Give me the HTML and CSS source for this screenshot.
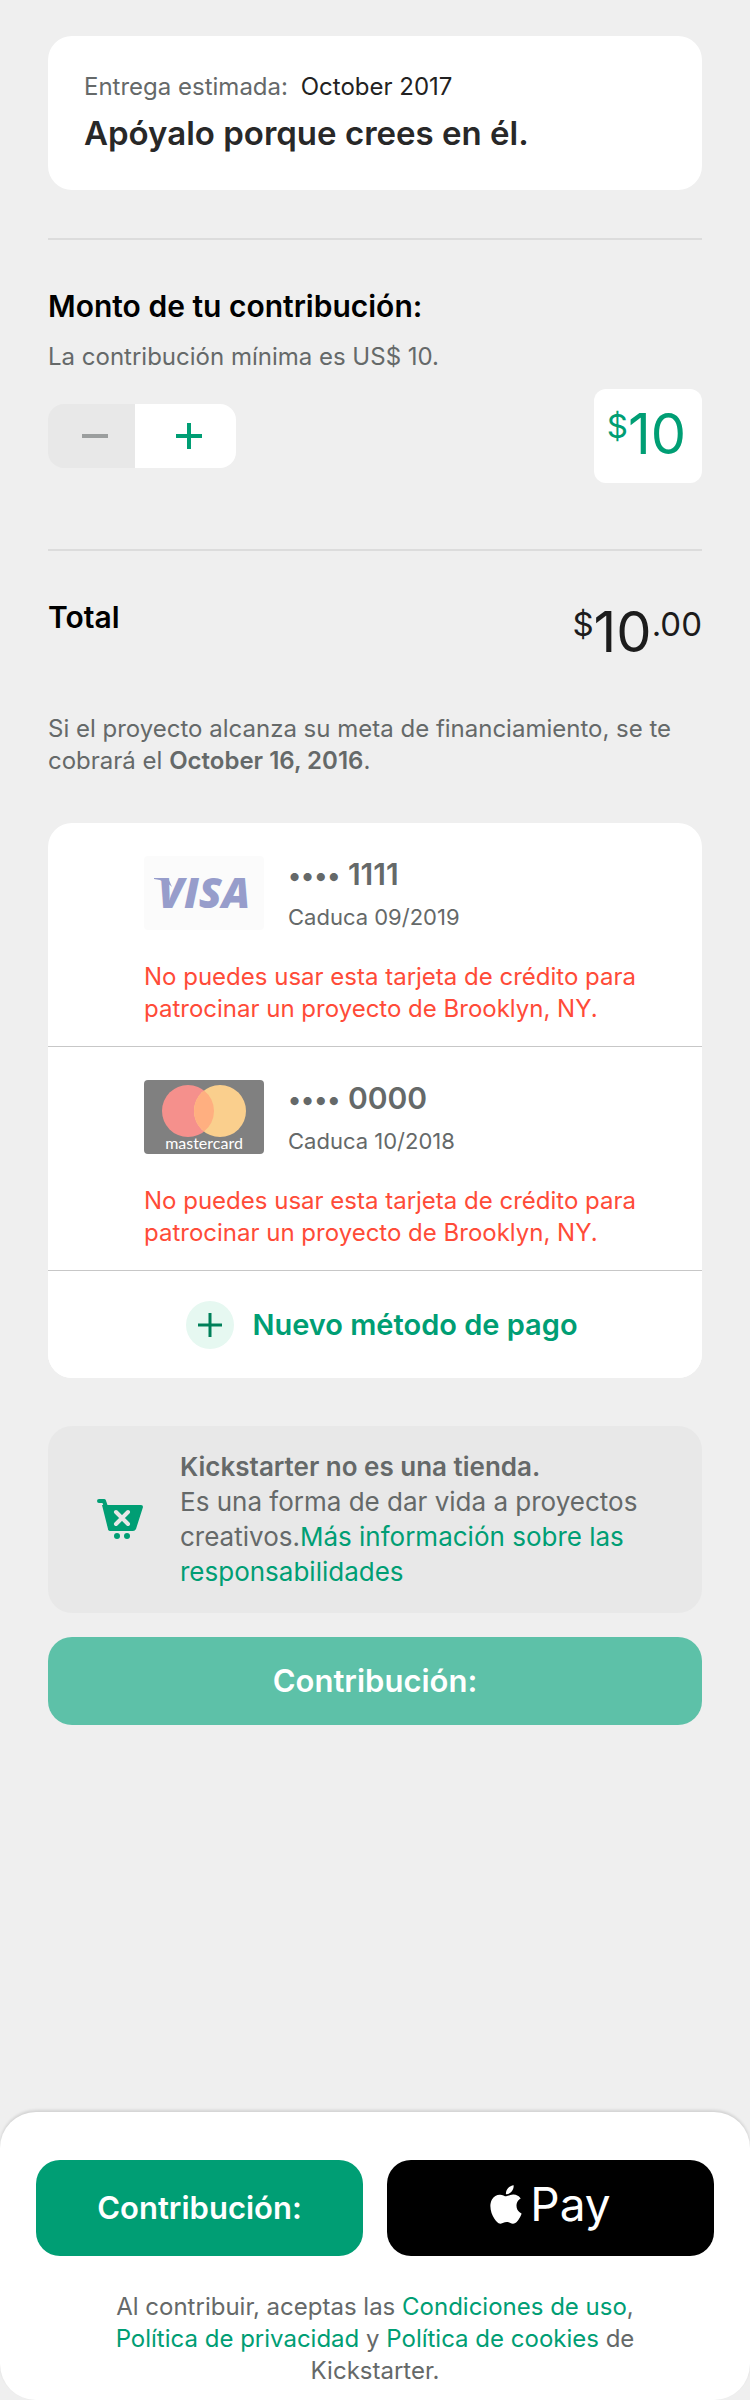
FILE: index.html
```html
<!DOCTYPE html>
<html lang="es">
<head>
<meta charset="utf-8">
<meta name="viewport" content="width=device-width, initial-scale=1">
<title>Contribución</title>
<link rel="stylesheet" href="styles.css">
</head>
<body>
<main class="content">
  <section class="reward">
    <p class="reward-date">Entrega estimada: <span class="reward-month">October 2017</span></p>
    <h1 class="reward-title">Apóyalo porque crees en él.</h1>
  </section>

  <section class="block">
    <h2 class="heading"><label for="amount">Monto de tu contribución:</label></h2>
    <p class="hint">La contribución mínima es US$ 10.</p>
    <div class="amount-row">
      <div class="stepper">
        <button class="step step-minus" type="button" aria-label="Disminuir" disabled>
          <svg width="28" height="28" viewBox="0 0 28 28" aria-hidden="true"><path d="M1 14h26" stroke="currentColor" stroke-width="4"/></svg>
        </button>
        <button class="step step-plus" type="button" aria-label="Aumentar">
          <svg width="28" height="28" viewBox="0 0 28 28" aria-hidden="true"><path d="M1 14h26M14 1v26" stroke="currentColor" stroke-width="4"/></svg>
        </button>
      </div>
      <div class="amount-box">
        <span class="currency">$</span><input class="amount-input" id="amount" type="text" inputmode="numeric" value="10">
      </div>
    </div>
  </section>

  <section class="block total">
    <h2 class="heading">Total</h2>
    <p class="total-value"><span class="small-figure">$</span><span class="big-figure">10</span><span class="small-figure">.00</span></p>
  </section>
  <p class="charge-note">Si el proyecto alcanza su meta de financiamiento, se te cobrará el <strong>October 16, 2016</strong>.</p>

  <section class="methods" aria-label="Métodos de pago">
    <ul class="card-list">
      <li class="card">
        <div class="card-main">
          <svg class="card-art" viewBox="0 0 120 74" role="img" aria-label="Visa">
            <rect width="120" height="74" rx="4" fill="#fbfbfb"/>
            <path d="M10 22h14l4 9c-4-4-10-7-18-8z" fill="#979dcb"/>
            <text class="visa-word" x="14" y="52">VISA</text>
          </svg>
          <div class="card-text">
            <p class="card-number"><span class="dots">••••</span> 1111</p>
            <p class="card-expiry">Caduca 09/2019</p>
          </div>
        </div>
        <p class="card-error">No puedes usar esta tarjeta de crédito para patrocinar un proyecto de Brooklyn, NY.</p>
      </li>
      <li class="card">
        <div class="card-main">
          <svg class="card-art" viewBox="0 0 120 74" role="img" aria-label="Mastercard">
            <rect width="120" height="74" rx="4" fill="#808080"/>
            <circle cx="44" cy="31" r="26" fill="#f5908c"/>
            <circle cx="76" cy="31" r="26" fill="#facf8d"/>
            <path d="M60 10.500a26 26 0 0 1 0 41a26 26 0 0 1 0-41z" fill="#ffaf80"/>
            <text class="master-word" x="60" y="69" text-anchor="middle">mastercard</text>
          </svg>
          <div class="card-text">
            <p class="card-number"><span class="dots">••••</span> 0000</p>
            <p class="card-expiry">Caduca 10/2018</p>
          </div>
        </div>
        <p class="card-error">No puedes usar esta tarjeta de crédito para patrocinar un proyecto de Brooklyn, NY.</p>
      </li>
    </ul>
    <button class="add-method" type="button">
      <svg width="48" height="48" viewBox="0 0 48 48" aria-hidden="true"><circle cx="24" cy="24" r="24" fill="#e6f8f1"/><path d="M12 24h24M24 12v24" stroke="#00805a" stroke-width="3"/></svg>
      <span>Nuevo método de pago</span>
    </button>
  </section>

  <section class="notice">
    <svg class="cart" width="46" height="40" viewBox="0 0 46 40" aria-hidden="true">
      <path d="M2 2h5l2 6" fill="none" stroke="#009e74" stroke-width="4" stroke-linecap="round" stroke-linejoin="round"/>
      <path d="M5 6h39q2 0 2 2l-7 22q-1 2-3 2H14q-3 0-3-2z" fill="#009e74"/>
      <path d="M19 13l12 12M31 13L19 25" stroke="#e8e8e8" stroke-width="4" stroke-linecap="round"/>
      <circle cx="20" cy="37" r="3" fill="#009e74"/><circle cx="30" cy="37" r="3" fill="#009e74"/>
    </svg>
    <p class="notice-text"><strong>Kickstarter no es una tienda.</strong><br>Es una forma de dar vida a proyectos creativos.<a class="link" href="#responsabilidades">Más información sobre las responsabilidades</a></p>
  </section>
  <button class="button button-muted" type="button">Contribución:</button>
</main>

<footer class="checkout">
  <div class="checkout-actions">
    <button class="button button-primary" type="button">Contribución:</button>
    <button class="button button-apple" type="button" aria-label="Apple Pay">
      <svg class="apple" viewBox="2 0 20 24" aria-hidden="true"><path fill="currentColor" d="M12.152 6.896c-.948 0-2.415-1.078-3.96-1.040-2.040.027-3.910 1.183-4.961 3.014-2.117 3.675-.546 9.103 1.519 12.090 1.013 1.454 2.208 3.090 3.792 3.039 1.520-.065 2.090-.987 3.935-.987 1.831 0 2.350.987 3.960.948 1.637-.026 2.676-1.480 3.676-2.948 1.156-1.688 1.636-3.325 1.662-3.415-.039-.013-3.182-1.221-3.220-4.857-.026-3.040 2.480-4.494 2.597-4.559-1.429-2.090-3.623-2.324-4.390-2.376-2-.156-3.675 1.090-4.610 1.090zM15.530 3.830c.843-1.012 1.400-2.427 1.245-3.830-1.207.052-2.662.805-3.532 1.818-.780.896-1.454 2.338-1.273 3.714 1.338.104 2.715-.688 3.559-1.701"/></svg>
      <span class="pay-word">Pay</span>
    </button>
  </div>
  <p class="legal">Al contribuir, aceptas las <a class="link" href="#condiciones">Condiciones de uso</a>, <a class="link" href="#privacidad">Política de privacidad</a> y <a class="link" href="#cookies">Política de cookies</a> de Kickstarter.</p>
</footer>
</body>
</html>
```
FILE: styles.css
```css
* {
  box-sizing: border-box;
}

body,
h1,
h2,
p,
ul {
  margin: 0;
  padding: 0;
}

body {
  display: flex;
  flex-direction: column;
  min-height: 100vh;
  background: #efefef;
  color: #656969;
  font-family: Inter, "Liberation Sans", sans-serif;
  font-size: 24px;
  line-height: 32px;
}

button,
input {
  border: 0;
  padding: 0;
  font: inherit;
}

strong {
  font-weight: 600;
}

.content {
  display: flex;
  flex-direction: column;
  padding: 36px 48px;
}

.reward {
  display: flex;
  flex-direction: column;
  gap: 8px;
  padding: 35px 36px;
  border-radius: 24px;
  background: #fff;
}

.reward-month {
  margin-left: 6px;
  color: #222;
}

.reward-title {
  color: #282828;
  font-size: 33px;
  font-weight: 600;
  line-height: 44px;
}

.block {
  margin-top: 48px;
  padding-top: 46px;
  border-top: 2px solid #dcdcdc;
}

.heading {
  color: #000;
  font-size: 30px;
  font-weight: 600;
  line-height: 40px;
}

.hint {
  margin-top: 15px;
}

.amount-row {
  display: flex;
  align-items: center;
  justify-content: space-between;
  margin: 16px 0 18px;
}

.stepper {
  display: flex;
  height: 64px;
  overflow: hidden;
  border-radius: 16px;
}

.step {
  display: flex;
  align-items: center;
  justify-content: center;
}

.step-minus {
  width: 87px;
  padding-left: 6px;
  background: #e8e8e8;
  color: #9b9e9e;
}

.step-plus {
  width: 101px;
  padding-left: 6px;
  background: #fff;
  color: #009e74;
}

.amount-box {
  display: flex;
  align-items: flex-start;
  min-width: 108px;
  height: 94px;
  padding: 17px 8px 0 13px;
  border-radius: 12px;
  background: #fff;
  color: #009e74;
}

.currency,
.small-figure {
  font-size: 33px;
  line-height: 40px;
}

.amount-input {
  width: 66px;
  height: 56px;
  background: transparent;
  color: inherit;
  font-size: 56px;
  line-height: 56px;
}

.total {
  display: flex;
  align-items: flex-start;
  justify-content: space-between;
}

.total-value {
  display: flex;
  align-items: flex-start;
  padding-top: 7px;
  color: #1c1c1c;
}

.big-figure {
  font-size: 56px;
  line-height: 56px;
}

.charge-note {
  margin-top: 53px;
}

.methods {
  margin-top: 46px;
  overflow: hidden;
  border-radius: 24px;
  background: #fff;
}

.card-list {
  list-style: none;
}

.card {
  padding: 31px 48px 21px 96px;
  border-bottom: 1px solid #c7c7c7;
}

.card-main {
  display: flex;
  align-items: center;
  gap: 24px;
}

.card-art {
  flex: none;
  width: 120px;
  height: 74px;
}

.visa-word {
  fill: #979dcb;
  font-family: "Open Sans", sans-serif;
  font-size: 42px;
  font-style: italic;
  font-weight: 800;
}

.master-word {
  fill: #fff;
  font-family: Lato, sans-serif;
  font-size: 16px;
}

.card-number {
  font-size: 30px;
  font-weight: 600;
  line-height: 40px;
}

.dots {
  font-size: 26px;
  line-height: 26px;
}

.card-expiry {
  margin-top: 9px;
  font-size: 22px;
  line-height: 28px;
}

.card-error {
  margin-top: 30px;
  color: #ff4b38;
}

.add-method {
  display: flex;
  align-items: center;
  justify-content: center;
  gap: 18px;
  width: 100%;
  height: 107px;
  padding-left: 14px;
  background: #fff;
  color: #009e74;
  font-size: 29px;
  font-weight: 600;
}

.notice {
  display: flex;
  align-items: center;
  gap: 37px;
  margin-top: 48px;
  padding: 23px 48px 24px 49px;
  border-radius: 24px;
  background: #e8e8e8;
}

.cart {
  flex: none;
}

.notice-text {
  font-size: 26px;
  line-height: 35px;
}

.link {
  color: #009e74;
  text-decoration: none;
}

.button {
  display: flex;
  align-items: center;
  justify-content: center;
  border-radius: 24px;
  color: #fff;
  font-size: 31px;
  font-weight: 600;
}

.button-muted {
  height: 88px;
  margin-top: 24px;
  background: #5dc1a8;
}

.checkout {
  margin-top: auto;
  padding: 48px 36px 5px;
  border-radius: 36px;
  background: #fff;
  box-shadow: 0 -2px 3px rgba(0, 0, 0, 0.12);
}

.checkout-actions {
  display: grid;
  grid-template-columns: 1fr 1fr;
  gap: 24px;
}

.checkout-actions .button {
  height: 96px;
}

.button-primary {
  background: #009e74;
}

.checkout-actions .button-apple {
  gap: 8px;
  padding-bottom: 8px;
  background: #000;
}

.apple {
  width: 32px;
  height: 39px;
}

.pay-word {
  font-size: 46px;
  font-weight: 400;
}

.legal {
  max-width: 560px;
  margin: 35px auto 0;
  padding-bottom: 8px;
  text-align: center;
}
```
